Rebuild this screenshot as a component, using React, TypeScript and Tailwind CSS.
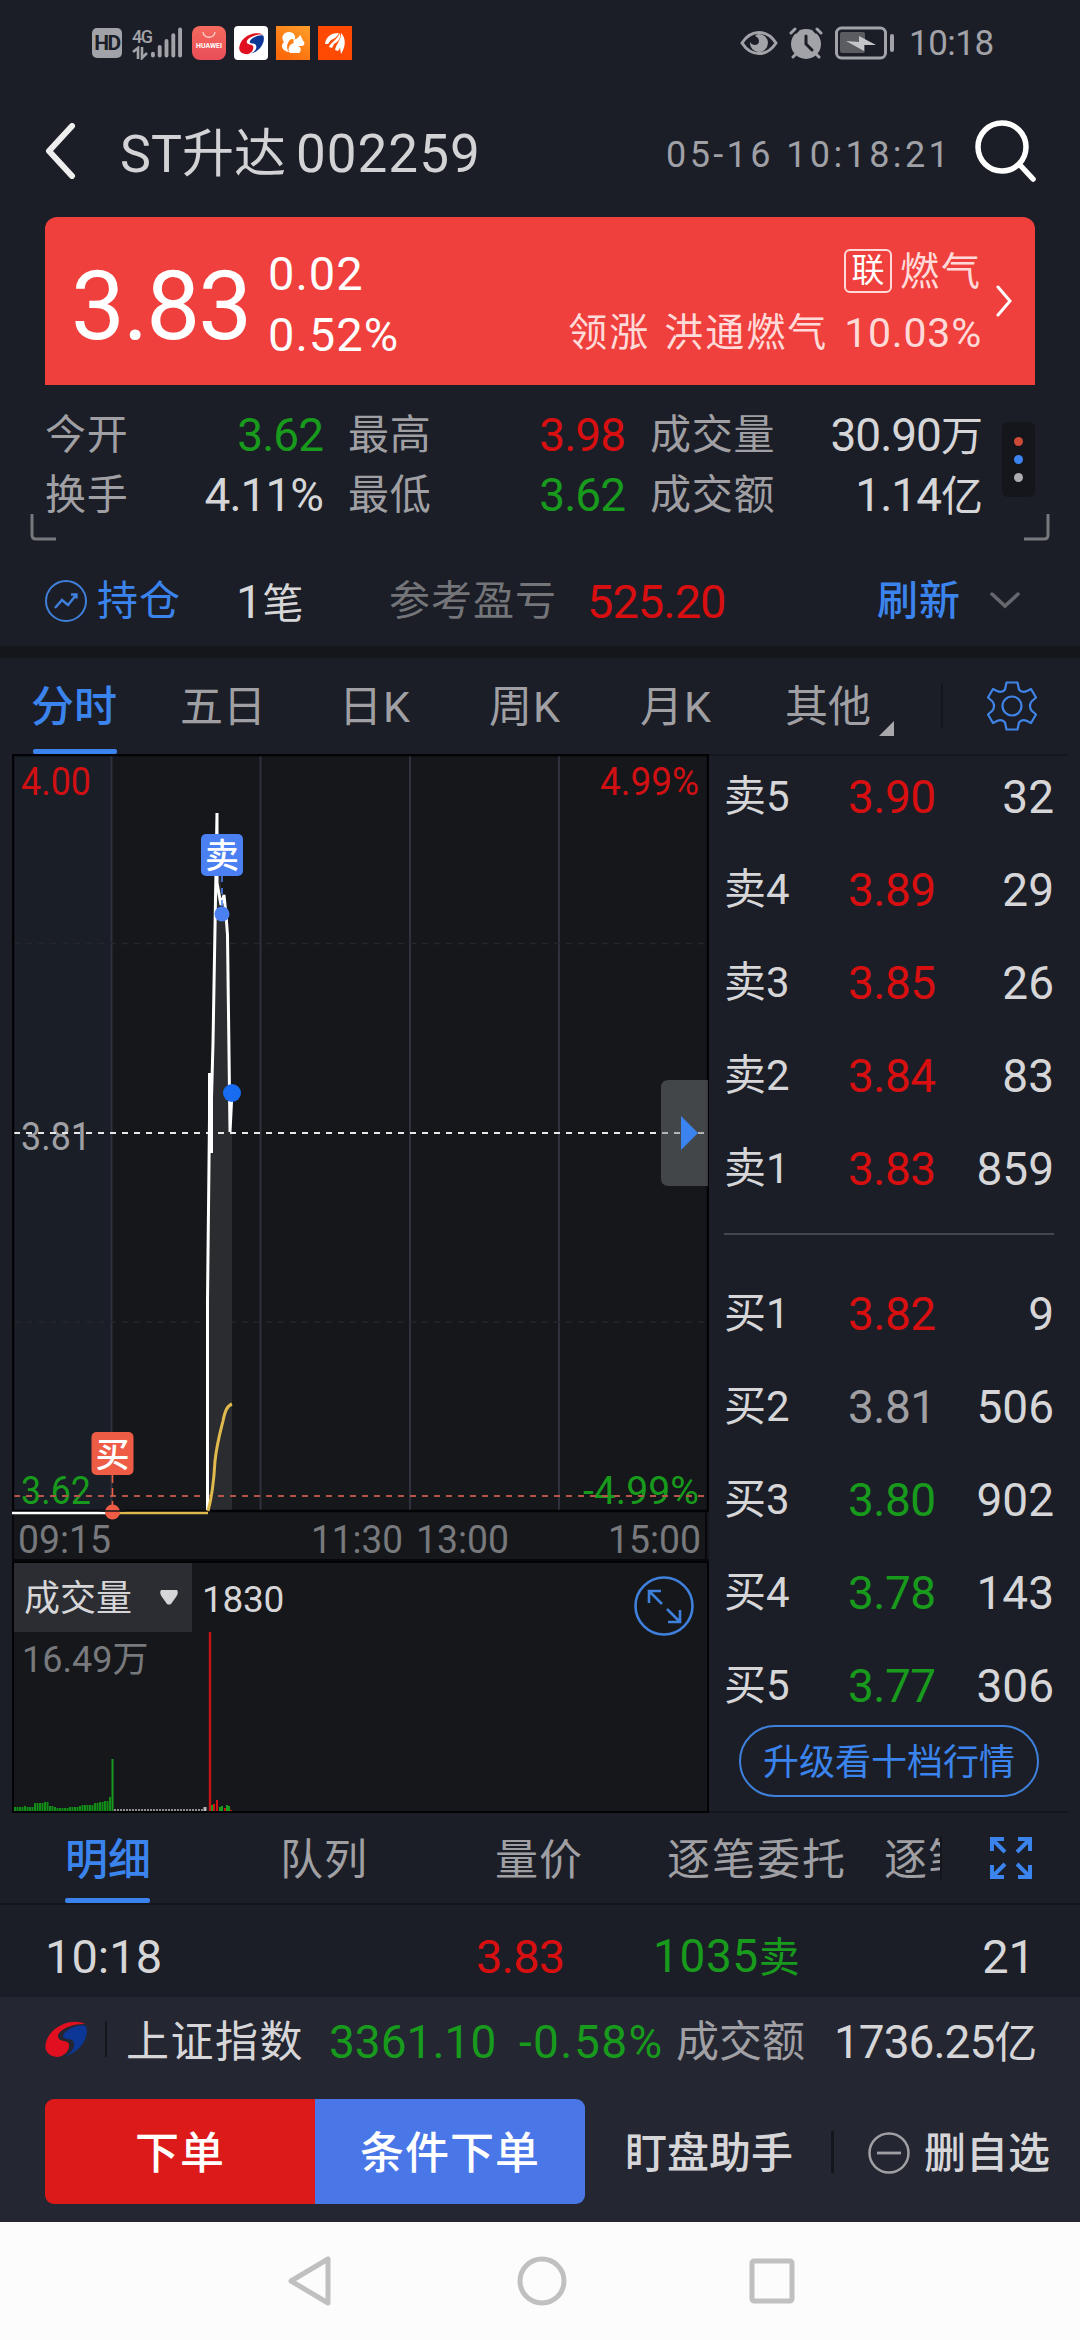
import type { ReactNode } from "react";
import clsx from "clsx";

type Tone = "up" | "down" | "flat" | "plain";

const toneClass: Record<Tone, string> = {
  up: "text-[#d80f10]",
  down: "text-[#189a1c]",
  flat: "text-[#a0a0a4]",
  plain: "text-[#d6d6d8]",
};

type Level = { label: string; price: string; volume: string; tone: Tone };

const asks: Level[] = [
  { label: "卖5", price: "3.90", volume: "32", tone: "up" },
  { label: "卖4", price: "3.89", volume: "29", tone: "up" },
  { label: "卖3", price: "3.85", volume: "26", tone: "up" },
  { label: "卖2", price: "3.84", volume: "83", tone: "up" },
  { label: "卖1", price: "3.83", volume: "859", tone: "up" },
];

const bids: Level[] = [
  { label: "买1", price: "3.82", volume: "9", tone: "up" },
  { label: "买2", price: "3.81", volume: "506", tone: "flat" },
  { label: "买3", price: "3.80", volume: "902", tone: "down" },
  { label: "买4", price: "3.78", volume: "143", tone: "down" },
  { label: "买5", price: "3.77", volume: "306", tone: "down" },
];

function BrandMark({ className }: { className?: string }) {
  return (
    <svg viewBox="0 0 42 36" className={className}>
      <path
        d="M40 3C28-4 3 5 .5 24-.5 32 6 36 13 36c7-1 12-7 11-13-1-4-10-2-11-7C12 9 28 2 40 3Z"
        fill="#e01020"
      />
      <path
        d="M41 5C35 2 19 9 18 15c0 4 8 2 10 5 4 6-3 13-8 15C34 32 45 17 41 5Z"
        fill="#0d3796"
      />
    </svg>
  );
}

function StatusBar() {
  return (
    <div className="flex h-[86px] items-center pl-[92px] text-[#a2a3a8]">
      <div className="flex h-[30px] w-[30px] items-center justify-center rounded-[5px] bg-[#a2a3a8] text-[21px] leading-none font-bold tracking-[-1.5px] text-[#1b1e27]">
        HD
      </div>
      <div className="ml-[9px] flex h-[34px] w-[52px] items-end">
        <div className="flex w-[19px] flex-col">
          <span className="pl-px text-[18px] leading-[19px] font-medium tracking-[-1.5px]">4G</span>
          <svg viewBox="0 0 19 14" className="h-[14px] w-[19px]">
            <path
              d="M7 13V2L2 6M11 1v11l5-5"
              stroke="currentColor"
              strokeWidth="2.600"
              fill="none"
            />
          </svg>
        </div>
        <svg viewBox="18 0 34 34" className="h-[34px] w-[34px]">
          <g fill="currentColor">
            <rect x="19" y="26" width="4" height="6" rx="2" />
            <rect x="26" y="19" width="4" height="13" rx="2" />
            <rect x="33" y="13" width="4" height="19" rx="2" />
            <rect x="40" y="7" width="4" height="25" rx="2" />
            <rect x="47" y="1" width="4" height="31" rx="2" />
          </g>
        </svg>
      </div>
      <div className="ml-[9px] flex gap-2">
        <svg viewBox="0 0 34 34" className="size-[34px]">
          <defs>
            <linearGradient id="hw" x1="0" y1="0" x2="0" y2="1">
              <stop offset="0" stopColor="#f56a5e" />
              <stop offset="1" stopColor="#ea4d58" />
            </linearGradient>
          </defs>
          <rect width="34" height="34" rx="8" fill="url(#hw)" />
          <path d="M11 6c1 7 11 7 12 0" stroke="#ffd6d2" strokeWidth="1.3" fill="none" />
          <text
            x="4"
            y="22"
            fontSize="7"
            fontWeight="700"
            textLength="26"
            lengthAdjust="spacingAndGlyphs"
            fill="#fff"
          >
            HUAWEI
          </text>
        </svg>
        <div className="flex size-[34px] items-center justify-center rounded-[4px] bg-white">
          <BrandMark className="h-[23px] w-[25px]" />
        </div>
        <svg viewBox="0 0 34 34" className="size-[34px]">
          <defs>
            <linearGradient id="uc" x1="1" y1="0" x2="0.4" y2="1">
              <stop offset="0" stopColor="#ff9f2a" />
              <stop offset="1" stopColor="#fb6a0a" />
            </linearGradient>
          </defs>
          <rect width="34" height="34" fill="url(#uc)" />
          <path
            d="M13 6c5 0 8 5 5 8-1-2-4-1-5 1-2 3-3 7 0 11C6 25 4 19 8 16 4 11 8 6 13 6Z"
            fill="#fff"
          />
          <path
            d="M24 9c2 2 2 5 4 7 1 2 0 4-3 4h-3c4 1 3 6 1 7H14c-3-3-1-9 4-10-1-1-1-3 1-4 2 0 4-2 5-4Z"
            fill="#fff"
          />
        </svg>
        <svg viewBox="0 0 34 34" className="size-[34px]">
          <rect width="34" height="34" fill="#fe4a02" />
          <path
            d="M7 18C8 10 14 7 21 7c-2 4-5 6-8 7l-3 4ZM11 21c1-4 7-6 11-14 1 7-3 9-6 11l-2 4ZM17 24c1-6 6-9 6-17 5 5 5 13 0 21l-1-6-2 3Z"
            fill="#fff"
          />
        </svg>
      </div>
      <svg viewBox="0 0 38 26" className="ml-[388px] h-[26px] w-[38px]">
        <path
          d="M2 13C11-1 27-1 36 13 27 27 11 27 2 13Z"
          fill="none"
          stroke="currentColor"
          strokeWidth="3"
        />
        <path d="M19 4a9 9 0 1 1-9 8c2 4 8 4 9 0 0-3-1-5-4-6 1-1 2-2 4-2Z" fill="currentColor" />
      </svg>
      <svg viewBox="0 0 34 32" className="ml-[11px] h-8 w-[34px]">
        <circle cx="17" cy="17" r="15" fill="currentColor" />
        <path d="M6 6l3-3M28 6l-3-3" stroke="#1b1e27" strokeWidth="3" />
        <path
          d="M17 9v8l6 6"
          stroke="#1b1e27"
          strokeWidth="3"
          fill="none"
          strokeLinecap="round"
        />
        <path
          d="M2 6 6 2M32 6l-4-4M4 30l4-4M30 30l-4-4"
          stroke="currentColor"
          strokeWidth="3"
          strokeLinecap="round"
        />
      </svg>
      <svg viewBox="0 0 60 34" className="ml-3 h-[34px] w-[60px]">
        <rect
          x="1.5"
          y="2"
          width="49"
          height="30"
          rx="5"
          fill="none"
          stroke="currentColor"
          strokeWidth="3"
        />
        <rect x="5" y="6" width="25" height="21" rx="2" fill="#5b5c61" />
        <path d="M11 15l13 1V10l17 9-12 0v6Z" fill="#c4c5c9" />
        <rect x="55" y="8" width="4" height="18" rx="2" fill="currentColor" />
      </svg>
      <span className="ml-[14px] text-[35px] tracking-[-0.5px]">10:18</span>
    </div>
  );
}

function Header() {
  return (
    <div className="flex h-[131px] items-center pb-[2px] pl-[45px]">
      <svg viewBox="0 0 31 56" className="h-14 w-[31px]">
        <path
          d="M27 3 4 28l23 25"
          fill="none"
          stroke="#eee"
          strokeWidth="6"
          strokeLinecap="round"
          strokeLinejoin="round"
        />
      </svg>
      <span className="ml-11 w-[176px] pt-[8px] text-[52px] whitespace-nowrap text-[#d3d3d5]">
        ST升达
      </span>
      <span className="w-[370px] pt-[8px] text-[53px] tracking-[1px] text-[#d3d3d5]">002259</span>
      <span className="w-[309px] pt-[8px] text-[36px] tracking-[3.4px] whitespace-nowrap text-[#a0a1a6]">
        05-16 10:18:21
      </span>
      <svg viewBox="0 0 62 64" className="h-16 w-[62px]">
        <circle cx="27" cy="28" r="24" fill="none" stroke="#fff" strokeWidth="5.5" />
        <path d="M45 46l13 14" stroke="#fff" strokeWidth="5.5" strokeLinecap="round" />
      </svg>
    </div>
  );
}

function QuoteCard() {
  return (
    <div className="mx-[45px] flex h-[168px] rounded-t-[12px] bg-[#ef403d] text-white">
      <span className="w-[223px] pt-[1px] pl-[26px] text-[96px] leading-[177px] tracking-[-2px]">
        3.83
      </span>
      <div className="flex w-[171px] flex-col pt-[26px] text-[47px] leading-[61px] tracking-[1px]">
        <span>0.02</span>
        <span>0.52%</span>
      </div>
      <div className="flex flex-1 flex-col items-end pt-[26px] text-[#ffdad9]">
        <div className="flex h-[58px] items-center">
          <span className="-mt-[3px] flex h-[44px] w-[48px] items-center justify-center rounded-[6px] border-2 border-[#ffdad9] text-[33px] leading-none text-white">
            联
          </span>
          <span className="ml-2 text-[39px] leading-[61px] tracking-[2px]">燃气</span>
        </div>
        <div className="flex h-[64px] items-center text-[39px] leading-[61px] tracking-[2px] whitespace-nowrap">
          <span>领涨</span>
          <span className="ml-[14px]">洪通燃气</span>
          <span className="ml-[16px] text-[41px] tracking-[0.8px]">10.03%</span>
        </div>
      </div>
      <svg viewBox="0 0 16 32" className="mt-[68px] mr-[23px] ml-[14px] h-8 w-4">
        <path d="M2 2l12 14L2 30" fill="none" stroke="#fff" strokeWidth="3" strokeLinecap="round" />
      </svg>
    </div>
  );
}

function Stat({
  label,
  value,
  tone,
  unit,
}: {
  label: string;
  value: string;
  tone: Tone;
  unit?: string;
}) {
  return (
    <div className="flex h-[60px] items-center justify-between whitespace-nowrap">
      <span className="text-[41px] tracking-[0.8px] text-[#a0a0a4]">{label}</span>
      <span className={clsx("text-[46px] tracking-[-1px]", toneClass[tone])}>
        {value}
        {unit && <span className="text-[42px]">{unit}</span>}
      </span>
    </div>
  );
}

function Stats() {
  return (
    <div className="flex h-[156px] px-[30px] pt-[18px]">
      <svg viewBox="0 0 28 28" className="mt-[110px] size-7 shrink-0">
        <path d="M2 1v21q0 4 4 4h20" fill="none" stroke="#77787c" strokeWidth="3" />
      </svg>
      <div className="-ml-[13px] grid grid-cols-[278px_277px_332px] content-start gap-x-[25px] pt-[2px]">
        <Stat label="今开" value="3.62" tone="down" />
        <Stat label="最高" value="3.98" tone="up" />
        <Stat label="成交量" value="30.90" unit="万" tone="plain" />
        <Stat label="换手" value="4.11%" tone="plain" />
        <Stat label="最低" value="3.62" tone="down" />
        <Stat label="成交额" value="1.14" unit="亿" tone="plain" />
      </div>
      <div className="mt-[19px] ml-[20px] flex h-[75px] w-[33px] shrink-0 flex-col items-center justify-center gap-[9px] rounded-[6px] bg-[#15161b]">
        <i className="size-[9px] rounded-full bg-[#cc4a36]" />
        <i className="size-[9px] rounded-full bg-[#3b84f0]" />
        <i className="size-[9px] rounded-full bg-[#adadb1]" />
      </div>
      <svg viewBox="0 0 28 28" className="mt-[110px] -ml-[13px] size-7 shrink-0">
        <path d="M26 1v21q0 4-4 4H2" fill="none" stroke="#77787c" strokeWidth="3" />
      </svg>
    </div>
  );
}

function PositionRow() {
  return (
    <div className="flex h-[105px] items-center pt-[14px] pl-[45px] text-[41px] whitespace-nowrap">
      <svg viewBox="0 0 42 42" className="size-[42px]">
        <circle cx="21" cy="21" r="20" fill="none" stroke="#3f80dc" strokeWidth="2" />
        <path
          d="M10 28l7-8 6 5 8-10M26 14.500h5.500v4"
          fill="none"
          stroke="#3f80dc"
          strokeWidth="2.400"
        />
      </svg>
      <span className="ml-[10px] w-[139px] pt-[2px] tracking-[1px] text-[#3b84ee]">持仓</span>
      <span className="w-[153px] pt-[2px] text-[#d6d6d8]">
        <span className="text-[47px]">1</span>笔
      </span>
      <span className="w-[198px] pt-[2px] tracking-[1px] text-[#747579]">参考盈亏</span>
      <span className="w-[290px] pt-[2px] text-[47px] tracking-[-1px] text-[#d80f10]">525.20</span>
      <span className="w-[113px] pt-[2px] font-medium tracking-[1px] text-[#3b84ee]">刷新</span>
      <svg viewBox="0 0 30 17" className="h-[17px] w-[30px]">
        <path
          d="M2 2l13 12L28 2"
          fill="none"
          stroke="#66676c"
          strokeWidth="3.500"
          strokeLinecap="round"
        />
      </svg>
    </div>
  );
}

function GearIcon() {
  return (
    <svg viewBox="0 0 50 50" className="size-[50px]" fill="none" stroke="#3f84e6" strokeWidth="2.200">
      <path
        strokeLinejoin="round"
        d="M19.500 1.500h11l1.500 7q3 4 8 1.500l4-2L49 16.500l-4.500 4q-3 4.500 0 9l4.500 4L44 42l-4-2q-5-2.500-8 1.500l-1.500 7h-11l-1.500-7q-3-4-8-1.500L6 42 1 33.500l4.500-4q3-4.500 0-9L1 16.500 6 8l4 2q5 2.500 8-1.500Z"
      />
      <circle cx="25" cy="25" r="9.500" />
    </svg>
  );
}

function PeriodTabs() {
  return (
    <div className="flex h-[96px] text-[43px] leading-[99px] whitespace-nowrap text-[#a0a0a4]">
      <div className="ml-[31px] flex w-[149px] flex-col">
        <span className="h-[91px] font-medium text-[#3b84ee]">分时</span>
        <i className="ml-0.5 h-[5px] w-[84px] rounded-[2px] bg-[#3b84ee]" />
      </div>
      <span className="w-[159px]">五日</span>
      <span className="w-[150px] tracking-[1px]">日K</span>
      <span className="w-[151px] tracking-[1px]">周K</span>
      <span className="w-[145px] tracking-[1px]">月K</span>
      <span className="w-[94px]">其他</span>
      <svg viewBox="0 0 15 15" className="mt-[63px] size-[15px]">
        <path d="M15 0v15H0Z" fill="#a8a8ac" />
      </svg>
      <i className="mt-[25px] ml-[47px] h-[45px] w-0.5 bg-[#15161b]" />
      <div className="mt-[23px] ml-[44px]">
        <GearIcon />
      </div>
    </div>
  );
}

function AxisText({
  x,
  y,
  w,
  fill,
  children,
}: {
  x: number;
  y: number;
  w: number;
  fill: string;
  children: ReactNode;
}) {
  return (
    <text x={x} y={y} textLength={w} lengthAdjust="spacingAndGlyphs" fontSize="38" fill={fill}>
      {children}
    </text>
  );
}

function PriceChart() {
  return (
    <svg viewBox="12 754 697 807" className="block h-[807px] w-[697px]">
      <rect x="12" y="754" width="697" height="807" fill="#15171b" />
      <rect x="14" y="756" width="97" height="754" fill="#1a1e27" />
      <g stroke="#2f313c" strokeWidth="2">
        <path d="M111.500 756v754M260.500 756v754M410 756v754M559 756v754" />
      </g>
      <path
        d="M14 943.500h690M14 1322h690"
        stroke="#24262b"
        strokeWidth="1.500"
        strokeDasharray="6 6"
      />

      {/* intraday price with its shaded area */}
      <path
        d="M208 1511V1150L214 1000l3-187 5 90 5 32 3 197 2 0V1511Z"
        fill="#2b2c30"
      />
      <AxisText x={21} y={795} w={70} fill="#d01012">4.00</AxisText>
      <AxisText x={600} y={795} w={99} fill="#d01012">4.99%</AxisText>
      <AxisText x={21} y={1150} w={70} fill="#a0a0a4">3.81</AxisText>
      <AxisText x={21} y={1504} w={70} fill="#189a1c">3.62</AxisText>
      <AxisText x={583} y={1504} w={116} fill="#189a1c">-4.99%</AxisText>
      <path
        d="M14 1133h690"
        stroke="#e8e8e8"
        strokeWidth="2"
        strokeDasharray="6 6"
      />
      <path
        d="M14 1496h690"
        stroke="#b4554a"
        strokeWidth="2"
        strokeDasharray="6 6"
      />
      <path d="M12 755h697M13 754v757M708 754v757M12 1511h697" stroke="#030306" strokeWidth="2.500" />
      <path d="M13 1513v46M706 1513v46M12 1560h697" stroke="#08080c" strokeWidth="2" />
      <path d="M12 1513h100" stroke="#fff" strokeWidth="2.400" />
      <path d="M112 1513h96" stroke="#e0b850" strokeWidth="2.400" />
      <path
        d="M207.500 1510V1300L210 1073v80l3-110 4-230v70l4 22 3-10 2 20 1.500 20 2.500 197 2-40"
        fill="none"
        stroke="#fff"
        strokeWidth="3"
      />
      <path d="M210.500 1073v80" stroke="#fff" strokeWidth="5" />
      <path
        d="M208 1511c4-14 6-32 7-50 2-18 6-32 8-40 2-10 4-15 9-17"
        fill="none"
        stroke="#e0ba4c"
        strokeWidth="3"
      />

      <path d="M222 876v34" stroke="#4b80f2" strokeWidth="1.600" strokeDasharray="6 6" />
      <rect x="201" y="834" width="42" height="42" rx="5" fill="#4b80f2" />
      <text x="205" y="868" fontSize="34" fontWeight="500" fill="#fff">卖</text>
      <circle cx="222" cy="914" r="7.500" fill="#4b80f2" />
      <circle cx="232" cy="1093" r="9" fill="#176cf2" />

      <path d="M112.500 1475v34" stroke="#ee5c46" strokeWidth="1.600" strokeDasharray="8 5" />
      <rect x="91.500" y="1432" width="42" height="43" rx="5" fill="#ee5c46" />
      <text x="95.500" y="1467" fontSize="34" fontWeight="500" fill="#fff">买</text>
      <circle cx="112.500" cy="1512" r="7.500" fill="#ee5c46" />
      <path d="M100 1511h26" stroke="#15171b" strokeWidth="1.500" />

      <path d="M708 1080h-39q-8 0-8 8v90q0 8 8 8h39Z" fill="#78797c" fillOpacity="0.480" />
      <path d="M681 1116v34l17-17Z" fill="#3b84f0" />

      <AxisText x={18} y={1553} w={93} fill="#78797d">09:15</AxisText>
      <AxisText x={311} y={1553} w={92} fill="#78797d">11:30</AxisText>
      <AxisText x={416} y={1553} w={93} fill="#78797d">13:00</AxisText>
      <AxisText x={608} y={1553} w={93} fill="#78797d">15:00</AxisText>
    </svg>
  );
}

const openingBars = [
  4, 4, 4, 4, 5, 4, 4, 4, 8, 8, 8, 8, 9, 9, 5, 5, 4, 3, 3, 3, 3, 3, 4, 4, 4, 4, 5, 6, 6, 6, 6, 6,
  8, 8, 9, 9, 10, 10, 14,
];

function VolumePanel() {
  return (
    <div className="relative h-[252px] w-[697px] border-2 border-[#030306] bg-[#15171b]">
      <div className="flex h-[69px] items-center text-[36px] text-[#d6d6d8]">
        <div className="flex h-full w-[178px] items-center bg-[#2b2d32] pt-[2px] pl-[10px]">
          成交量
          <svg viewBox="0 0 20 16" className="-mt-[3px] ml-[27px] h-4 w-5">
            <path d="M2 1h16q2 3-1 7l-5 7q-2 1-4 0L3 8Q0 4 2 1Z" fill="#d6d6d8" />
          </svg>
        </div>
        <span className="ml-[10px] pt-[3px] text-[37px] tracking-[-0.3px]">1830</span>
        <svg
          viewBox="0 0 60 60"
          className="mt-[17px] mr-[13px] ml-auto size-[60px]"
          fill="none"
          stroke="#3f80dc"
          strokeWidth="2.600"
        >
          <circle cx="30" cy="30" r="28.500" />
          <path d="M15 27V15h12M15 15l13 13M33 33l13 13M46 34v12H34" />
        </svg>
      </div>
      <svg viewBox="14 1632 693 179" className="block h-[179px] w-[693px]">
        {openingBars.map((h, i) => (
          <rect key={i} x={14 + i * 2.5} y={1811 - h} width="2" height={h} fill="#128a16" />
        ))}
        <path d="M112.500 1759v52" stroke="#189a1c" strokeWidth="2" />
        <path d="M114 1810h92" stroke="#8d8d90" strokeWidth="2" strokeDasharray="2 1" />
        <path d="M205 1807v4" stroke="#bbb" strokeWidth="3" />
        <path d="M210 1632v179" stroke="#c81414" strokeWidth="2.400" />
        <path d="M214 1804v7M217 1800v11M225 1808v3M231 1810v1" stroke="#d01012" strokeWidth="2" />
        <path d="M212 1805v6M220 1807v4M222 1806v5M227 1805v6M229 1806v5" stroke="#189a1c" strokeWidth="2" />
      </svg>
      <span className="absolute top-[73px] left-[8px] text-[36px] leading-[48px] text-[#78797d]">
        16.49万
      </span>
    </div>
  );
}

function BookRow({ level }: { level: Level }) {
  return (
    <div className="flex h-[93px] items-center whitespace-nowrap text-[#d6d6d8]">
      <span className="w-[124px] text-[42px]">{level.label}</span>
      <span className={clsx("text-[46px] tracking-[-0.5px]", toneClass[level.tone])}>
        {level.price}
      </span>
      <span className="ml-auto text-[46px]">{level.volume}</span>
    </div>
  );
}

function OrderBook() {
  return (
    <div className="mr-[12px] flex flex-1 flex-col border-y-2 border-[#15161b] pr-[14px] pl-[15px]">
      <div className="-mt-[6px] mb-[18px]">
        {asks.map((l) => (
          <BookRow key={l.label} level={l} />
        ))}
      </div>
      <div className="h-[2px] shrink-0 bg-[#45464e]" />
      <div className="pt-[32px]">
        {bids.map((l) => (
          <BookRow key={l.label} level={l} />
        ))}
      </div>
      <div className="-mt-[7px] ml-[15px] flex h-[72px] w-[300px] shrink-0 items-center justify-center rounded-full border-2 border-[#3f80dc] pt-[3px] text-[36px] text-[#3b84ee]">
        升级看十档行情
      </div>
    </div>
  );
}

function DetailTabs() {
  return (
    <div className="flex h-[92px] border-b-2 border-[#15161b] text-[43px] leading-[95px] whitespace-nowrap text-[#a0a0a4]">
      <div className="ml-[65px] flex w-[215px] flex-col">
        <span className="h-[85px] font-medium text-[#3b84ee]">明细</span>
        <i className="h-[5px] w-[85px] rounded-[2px] bg-[#3b84ee]" />
      </div>
      <span className="w-[215px] tracking-[1px]">队列</span>
      <span className="w-[172px] tracking-[1px]">量价</span>
      <span className="w-[217px] tracking-[2px]">逐笔委托</span>
      <span className="w-[56px] overflow-hidden tracking-[1px]">逐笔</span>
      <i className="mt-[23px] h-[45px] w-0.5 bg-[#15161b]" />
      <svg
        viewBox="0 0 42 42"
        className="mt-[24px] ml-[48px] size-[42px]"
        fill="none"
        stroke="#3b84ee"
        strokeWidth="4"
      >
        <path d="M2 14V2h12M2 2l13 13M28 2h12v12M40 2 27 15M2 28v12h12M2 40l13-13M40 28v12H28M40 40 27 27" />
      </svg>
    </div>
  );
}

function TradeRow() {
  return (
    <div className="flex h-[92px] items-center pt-[10px] pr-[45px] pl-[45px] text-[47px] whitespace-nowrap text-[#d6d6d8]">
      <span className="w-[431px]">10:18</span>
      <span className="w-[177px] tracking-[-0.8px] text-[#d80f10]">3.83</span>
      <span className="text-[46px] tracking-[0.6px] text-[#189a1c]">
        1035<span className="text-[41px]">卖</span>
      </span>
      <span className="ml-auto">21</span>
    </div>
  );
}

function IndexBar() {
  return (
    <div className="flex h-[88px] items-center pl-[45px] whitespace-nowrap">
      <BrandMark className="mt-[-4px] h-[36px] w-[42px]" />
      <i className="mt-[-4px] ml-[18px] h-[36px] w-0.5 bg-[#15161b]" />
      <span className="ml-[19px] w-[203px] pt-[2px] text-[43px] tracking-[1.5px] text-[#d6d6d8]">
        上证指数
      </span>
      <span className="w-[190px] pt-[2px] text-[46px] text-[#189a1c]">3361.10</span>
      <span className="w-[157px] pt-[2px] text-[46px] tracking-[1.4px] text-[#189a1c]">-0.58%</span>
      <span className="w-[158px] pt-[2px] text-[43px] text-[#a0a0a4]">成交额</span>
      <span className="pt-[2px] text-[46px] tracking-[-1px] text-[#d6d6d8]">
        1736.25<span className="text-[43px]">亿</span>
      </span>
    </div>
  );
}

function Actions() {
  return (
    <div className="mt-[14px] flex h-[105px] items-center pl-[45px] text-[44px] font-medium whitespace-nowrap">
      <button className="h-[105px] w-[270px] rounded-l-[9px] bg-[#dc1a19] pt-[5px] tracking-[1px] text-white">
        下单
      </button>
      <button className="h-[105px] w-[270px] rounded-r-[9px] bg-[#4a77e8] pt-[5px] tracking-[1px] text-white">
        条件下单
      </button>
      <span className="ml-[40px] w-[206px] pt-[5px] text-[42px] text-[#d6d6d8]">盯盘助手</span>
      <i className="h-[42px] w-[3px] bg-[#15161b]" />
      <svg viewBox="0 0 42 42" className="mt-[3px] ml-[34px] size-[42px]">
        <circle cx="21" cy="21" r="19.500" fill="none" stroke="#a0a0a4" strokeWidth="2.500" />
        <path d="M9 21h24" stroke="#a0a0a4" strokeWidth="2.800" />
      </svg>
      <span className="ml-[14px] pt-[5px] text-[42px] text-[#d6d6d8]">删自选</span>
    </div>
  );
}

function NavBar() {
  return (
    <div className="flex h-[118px] items-center justify-center bg-[#fcfcfc]">
      <svg viewBox="0 0 48 52" className="h-[52px] w-12" fill="none" stroke="#c0c0c0" strokeWidth="5">
        <path d="M42 4v44L5 26Z" strokeLinejoin="round" />
      </svg>
      <svg
        viewBox="0 0 50 50"
        className="mr-[182px] ml-[183px] size-[50px]"
        fill="none"
        stroke="#c0c0c0"
        strokeWidth="5"
      >
        <circle cx="25" cy="25" r="22" />
      </svg>
      <svg viewBox="0 0 46 46" className="size-[46px]" fill="none" stroke="#c0c0c0" strokeWidth="5">
        <rect x="3" y="3" width="40" height="40" rx="2" />
      </svg>
    </div>
  );
}

export default function App() {
  return (
    <div className="flex h-[2340px] w-[1080px] flex-col overflow-hidden bg-[#1b1e27] font-['Roboto','Noto_Sans_CJK_SC',sans-serif] leading-none">
      <StatusBar />
      <Header />
      <QuoteCard />
      <Stats />
      <PositionRow />
      <div className="h-3 bg-[#15161b]" />
      <PeriodTabs />
      <div className="flex h-[1059px] pl-[12px]">
        <div className="flex w-[697px] flex-col">
          <PriceChart />
          <VolumePanel />
        </div>
        <OrderBook />
      </div>
      <DetailTabs />
      <TradeRow />
      <div className="h-[225px] bg-[#242632]">
        <IndexBar />
        <Actions />
      </div>
      <NavBar />
    </div>
  );
}
